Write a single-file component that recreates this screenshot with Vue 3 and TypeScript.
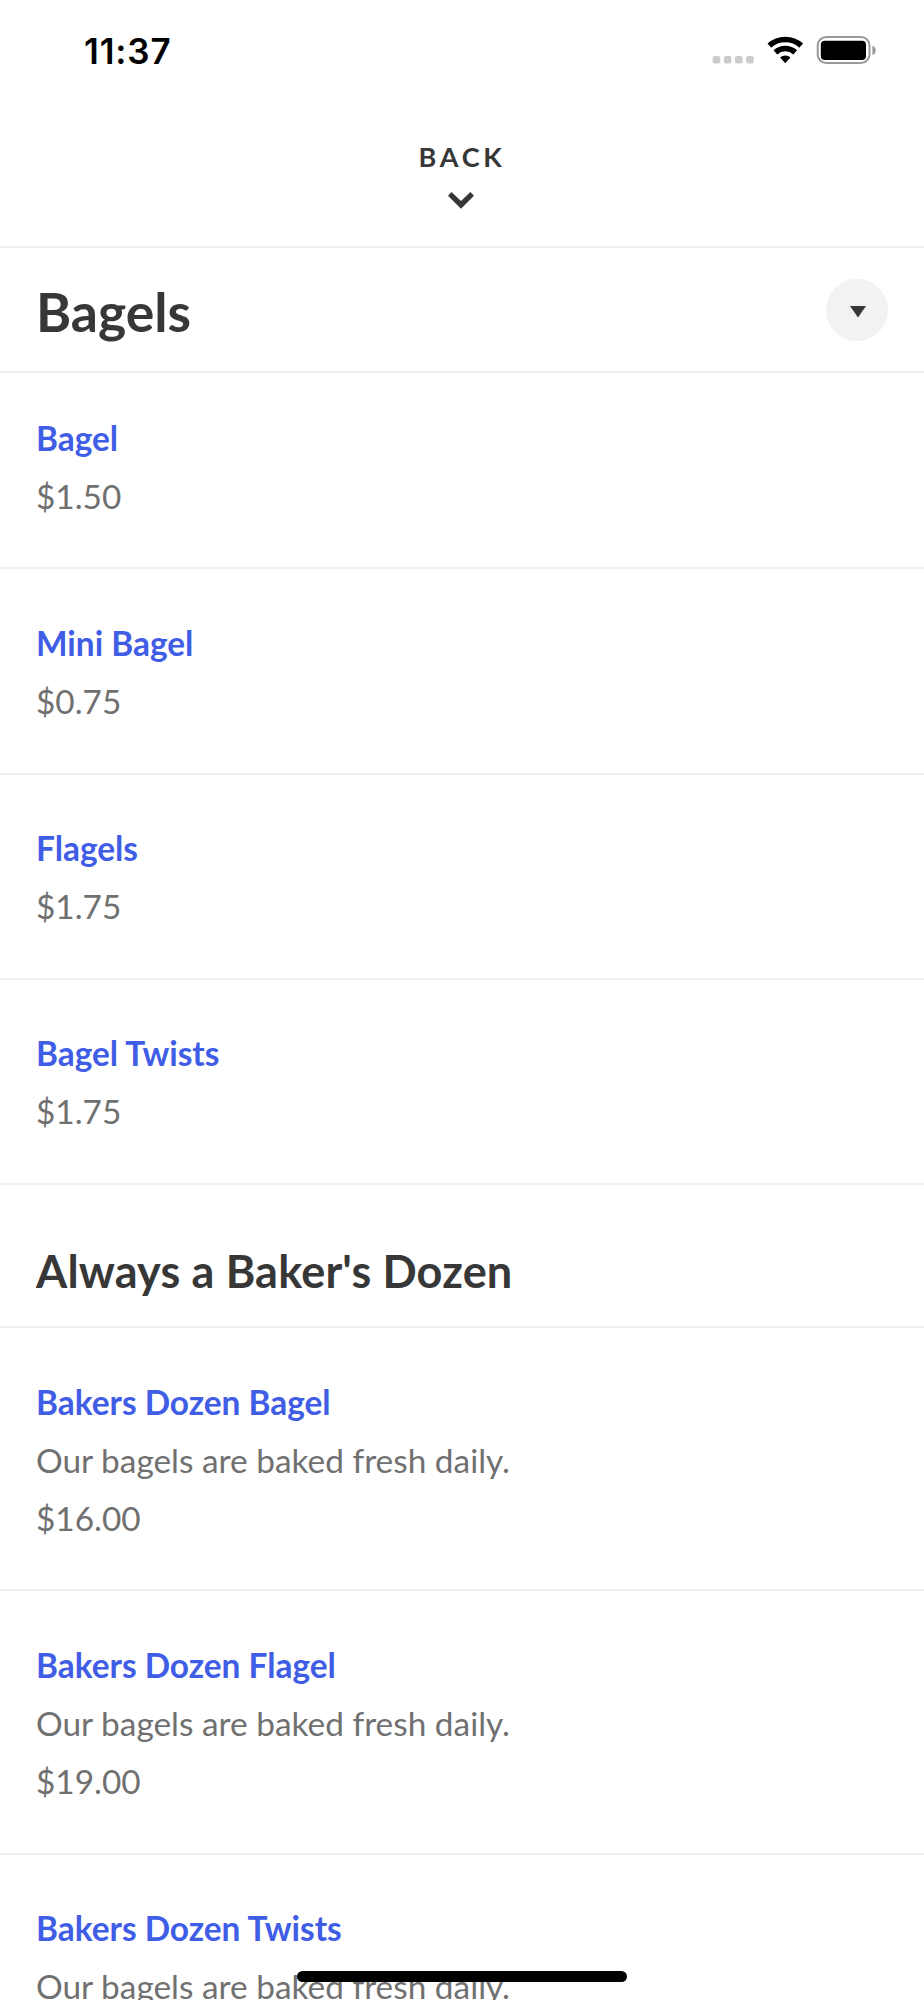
<script setup lang="ts">
interface Item { name: string; price: string; description?: string }
const bagels: Item[] = [
  { name: 'Bagel', price: '$1.50' },
  { name: 'Mini Bagel', price: '$0.75' },
  { name: 'Flagels', price: '$1.75' },
  { name: 'Bagel Twists', price: '$1.75' },
]
const description = 'Our bagels are baked fresh daily.'
const dozens: Item[] = [
  { name: 'Bakers Dozen Bagel', description, price: '$16.00' },
  { name: 'Bakers Dozen Flagel', description, price: '$19.00' },
]
</script>

<template>
  <main class="screen">
    <header class="status">
      <span class="time">11:37</span>
      <svg class="signals" width="166" height="30" viewBox="0 0 166 30">
        <g fill="#cbcbcb"><rect x="0.7" y="21" width="7.6" height="7.5" rx="2"/><rect x="11.9" y="21" width="7.6" height="7.5" rx="2"/><rect x="23" y="21" width="7.6" height="7.5" rx="2"/><rect x="34.1" y="21" width="7.6" height="7.5" rx="2"/></g>
        <g fill="none" stroke="#000" stroke-width="5.6"><path d="M57.4 10.6A23.8 23.8 0 0 1 89.2 10.6"/><path d="M63.4 17.3A14.8 14.8 0 0 1 83.2 17.3"/></g>
        <path d="M68.1 22.6A7.7 7.7 0 0 1 78.5 22.6L73.3 28.3Z"/>
        <rect x="105.7" y="2" width="51.8" height="26" rx="8.5" fill="none" stroke="#999" stroke-width="2"/>
        <rect x="108.8" y="5.7" width="45.2" height="19.3" rx="4"/>
        <path d="M160.4 10.7Q163.7 12 163.7 15.3Q163.7 18.7 160.4 20Z" fill="#999"/>
      </svg>
    </header>
    <nav class="back"><span>BACK</span><svg width="26" height="17" viewBox="0 0 26 17"><path d="M0 3.8L3.6 0L13 9L22.4 0L26 3.8L13 16.8Z" fill="#373737"/></svg></nav>
    <div class="title"><h1>Bagels</h1><button aria-label="Choose category"><svg width="16" height="12" viewBox="0 0 16 12"><path d="M0 0H16L8 11.5Z" fill="#373737"/></svg></button></div>
    <article v-for="(item, i) in bagels" :key="item.name" class="item" :class="{ first: i === 0 }"><h3>{{ item.name }}</h3><p>{{ item.price }}</p></article>
    <h2>Always a Baker's Dozen</h2>
    <article v-for="item in dozens" :key="item.name" class="item"><h3>{{ item.name }}</h3><p>{{ item.description }}</p><p>{{ item.price }}</p></article>
    <article class="item last"><h3>Bakers Dozen Twists</h3><p>{{ description }}</p></article>
    <div class="home"></div>
  </main>
</template>

<style scoped>
* { box-sizing: border-box; }
.screen { position: relative; width: 924px; height: 2000px; overflow: hidden; background: #fff; color: #373737; font-family: Lato, sans-serif; }
.status { height: 116px; padding: 35px 46px 0 84px; display: flex; justify-content: space-between; }
.time { color: #000; font: 600 35px/32px Inter, sans-serif; letter-spacing: 0.85px; }
.signals { display: block; }
.back { height: 132px; border-bottom: 2px solid #efefef; display: flex; flex-direction: column; align-items: center; padding-top: 23px; }
.back span { font-size: 27px; line-height: 36px; font-weight: 700; letter-spacing: 3.7px; }
.back svg { margin: 17.3px 2.6px 0 0; }
.title { height: 125px; padding: 0 36px; display: flex; align-items: center; justify-content: space-between; border-bottom: 2px solid #efefef; }
h1 { margin: 2px 0 0; font-size: 53.5px; line-height: 64px; }
button { width: 62.4px; height: 62.4px; margin-top: 1.4px; padding: 0; border: 0; border-radius: 50%; background: #f2f2f2; display: flex; align-items: center; justify-content: center; }
button svg { margin: 3px 0 0 2px; }
.item { border-bottom: 2px solid #efefef; padding: 44.5px 36px 42.8px; }
.item.first { padding: 36.2px 36px 42.1px; }
.item.last { border: 0; padding-bottom: 0; }
h3, p { margin: 0; font-size: 33.4px; line-height: 58px; }
h3 { color: #405de6; }
p { color: #707070; }
h2 { margin: 0; height: 143px; padding: 56.4px 36px 0; font-size: 45px; line-height: 58px; letter-spacing: 0.17px; border-bottom: 2px solid #efefef; }
.home { position: absolute; left: 297px; bottom: 18px; width: 330px; height: 11px; border-radius: 6px; background: #000; }
</style>

<style>body { background: #fff; }</style>
